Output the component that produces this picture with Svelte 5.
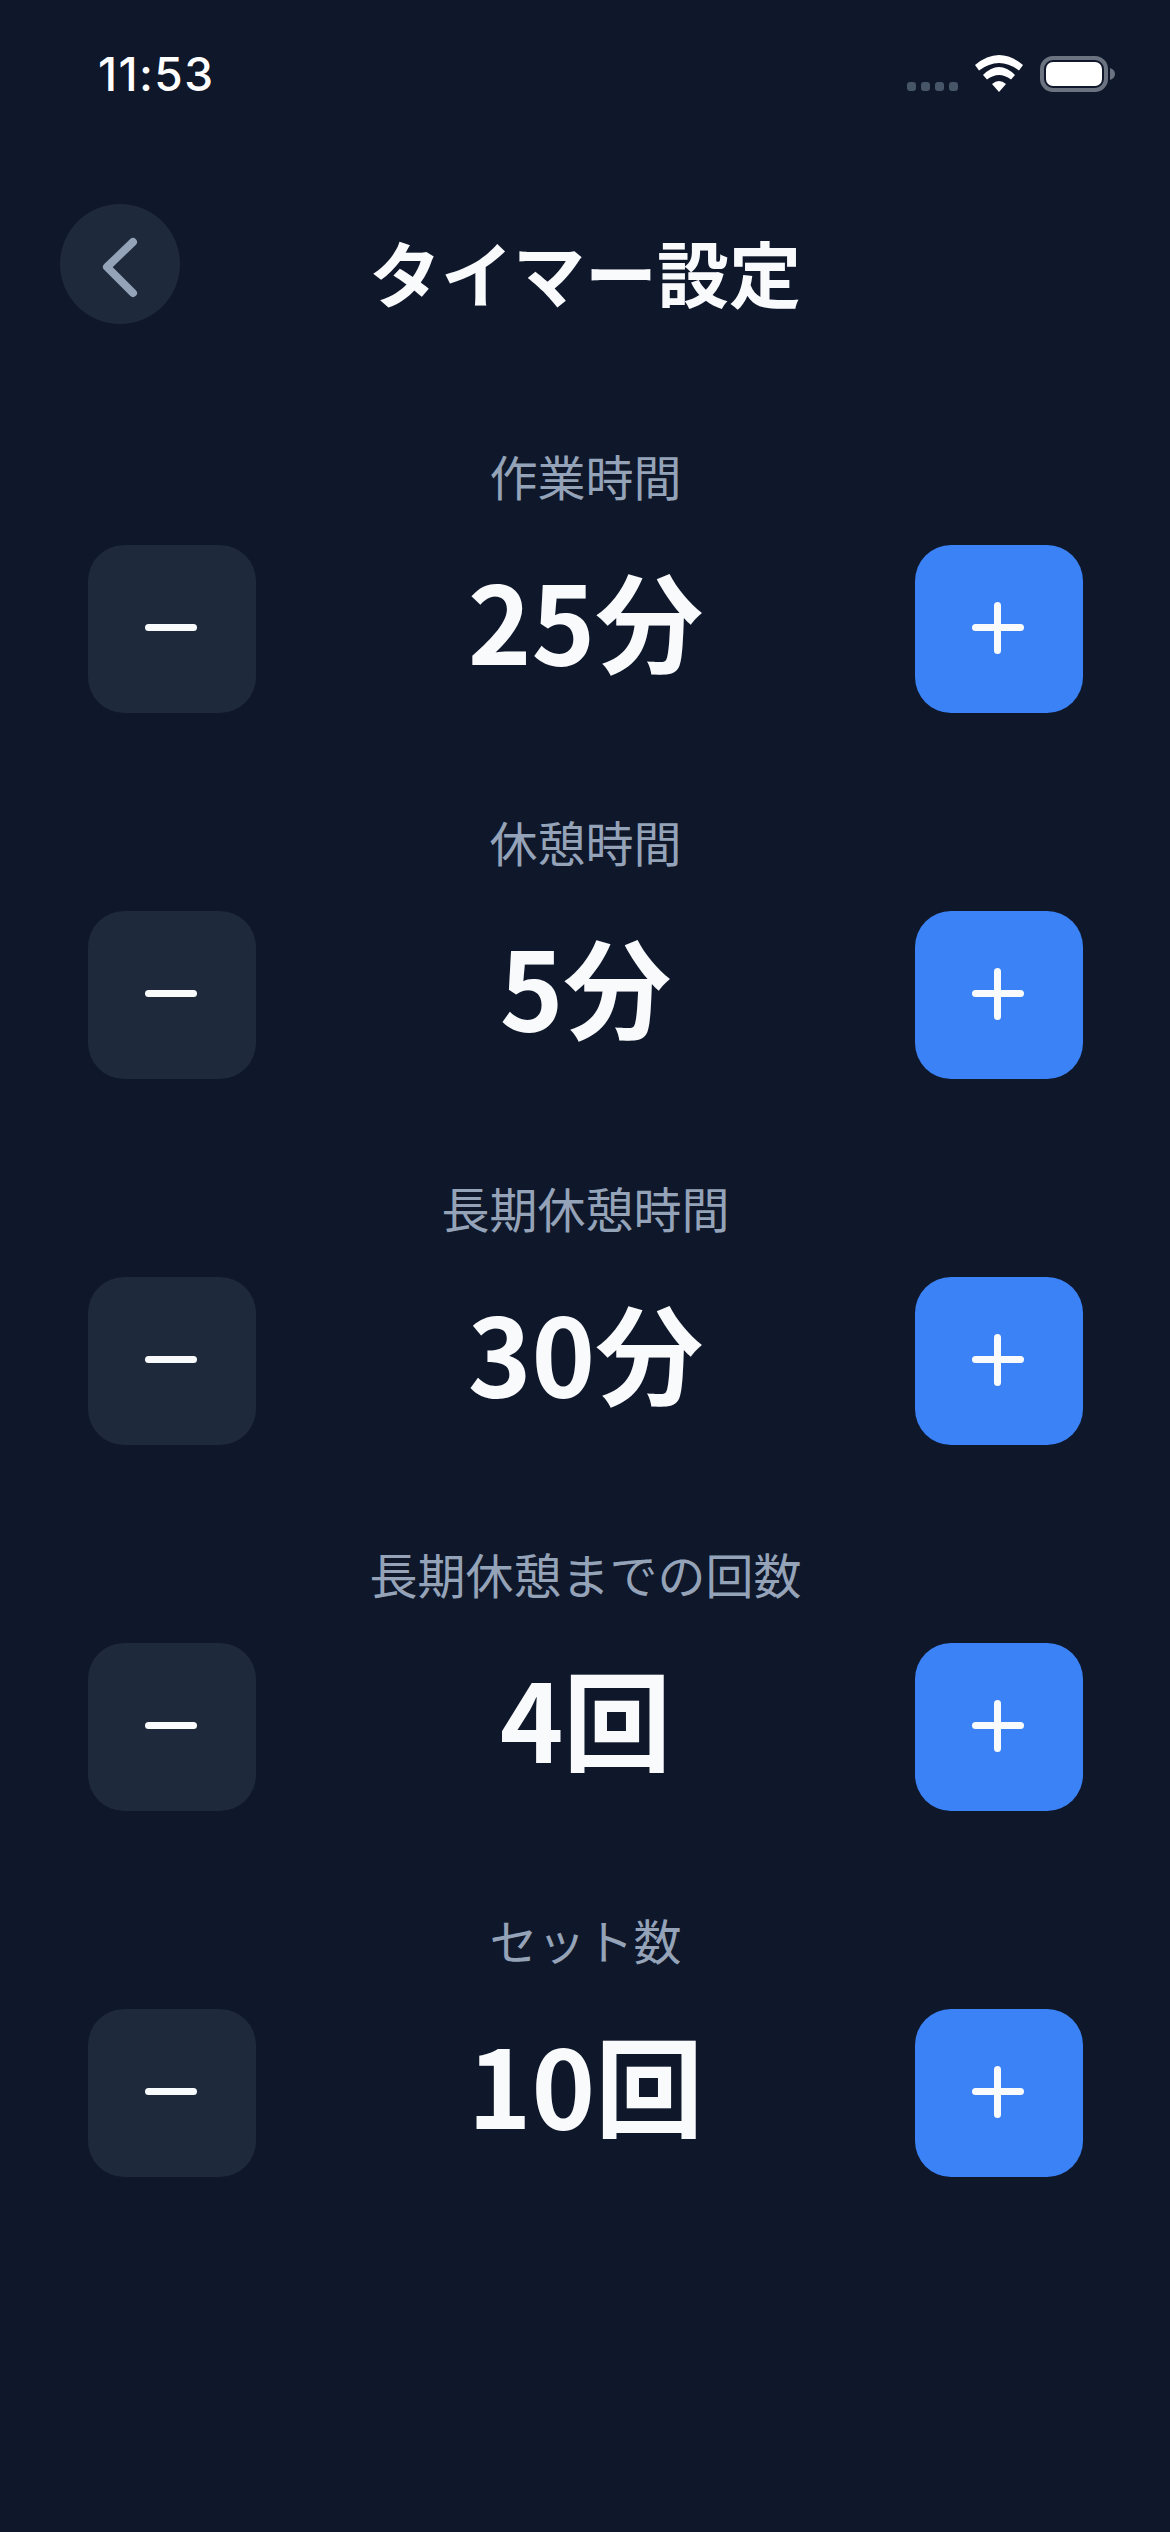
<script lang="ts">
  const settings = [
    { label: "作業時間", value: "25分" },
    { label: "休憩時間", value: "5分" },
    { label: "長期休憩時間", value: "30分" },
    { label: "長期休憩までの回数", value: "4回" },
    { label: "セット数", value: "10回" }
  ];
</script>

<div class="screen">
  <div class="status">
    <span class="time">11:53</span>
    <div class="status-icons">
      <div class="dots"><i></i><i></i><i></i><i></i></div>
      <svg class="wifi" width="48" height="37" viewBox="0 0 48 37">
        <path d="M0 10 Q24 -10 48 10 L44 15.500 Q24 0.500 4 15.500 Z" fill="#fff" />
        <path d="M8 20 Q24 4 40 20 L36 24.500 Q24 15.500 12 24.500 Z" fill="#fff" />
        <path d="M17 29 Q24 23 31 29 L24 37 Z" fill="#fff" />
      </svg>
      <svg class="battery" width="75" height="36" viewBox="0 0 75 36">
        <rect x="2" y="2" width="64" height="32" rx="11" fill="none" stroke="#6b7280" stroke-width="4" />
        <rect x="6" y="6" width="56" height="24" rx="7" fill="#fff" />
        <path d="M70 12 C73 13 75 15 75 18 C75 21 73 23 70 24 Z" fill="#6b7280" />
      </svg>
    </div>
  </div>

  <header class="header">
    <button class="back" aria-label="戻る">
      <svg width="120" height="120" viewBox="0 0 120 120">
        <path d="M73 38 L47 63 L73 89" fill="none" stroke="#94a3b8" stroke-width="8" stroke-linecap="round" stroke-linejoin="round" />
      </svg>
    </button>
    <h1>タイマー設定</h1>
  </header>

  <main class="settings">
    {#each settings as item}
      <section class="setting">
        <div class="label">{item.label}</div>
        <div class="controls">
          <button class="step minus" aria-label="減らす"><span class="bar"></span></button>
          <div class="value">{item.value}</div>
          <button class="step plus" aria-label="増やす"><span class="bar"></span><span class="bar vertical"></span></button>
        </div>
      </section>
    {/each}
  </main>
</div>

<style>
  :global(body) {
    margin: 0;
    background: #0f172a;
  }

  .screen {
    width: 1170px;
    height: 2532px;
    overflow: hidden;
    background: #0f172a;
    color: #f8fafc;
    font-family: "Noto Sans CJK JP", "Noto Sans", sans-serif;
  }

  .status {
    display: flex;
    justify-content: space-between;
    height: 108px;
    padding: 0 55px 0 98px;
    box-sizing: border-box;
  }

  .time {
    margin-top: 49px;
    font-family: Inter, sans-serif;
    font-size: 46px;
    font-weight: 500;
    letter-spacing: 1.4px;
    line-height: 50px;
    color: #fff;
  }

  .status-icons {
    display: flex;
    align-items: flex-start;
    margin-top: 55px;
  }

  .dots {
    display: flex;
    gap: 5px;
    margin-top: 27px;
    margin-right: 17px;
  }

  .dots i {
    width: 9px;
    height: 9px;
    border-radius: 3px;
    background: #475569;
  }

  .wifi {
    margin-right: 17px;
  }

  .battery {
    margin-top: 1px;
  }

  .header {
    position: relative;
    height: 120px;
    margin-top: 96px;
    padding-left: 60px;
  }

  .back {
    display: block;
    width: 120px;
    height: 120px;
    padding: 0;
    border: 0;
    border-radius: 50%;
    background: #1e293b;
  }

  .back svg {
    display: block;
  }

  h1 {
    position: absolute;
    inset: 0;
    margin: 0;
    font-size: 72px;
    font-weight: 700;
    line-height: 134px;
    text-align: center;
  }

  .settings {
    display: flex;
    flex-direction: column;
    gap: 92px;
    margin-top: 115px;
    padding: 0 87px 0 88px;
  }

  .label {
    height: 72px;
    margin-bottom: 34px;
    color: #94a3b8;
    font-size: 48px;
    line-height: 72px;
    text-align: center;
  }

  .controls {
    display: flex;
    align-items: center;
    justify-content: space-between;
  }

  .step {
    position: relative;
    width: 168px;
    height: 168px;
    padding: 0;
    border: 0;
    border-radius: 36px;
  }

  .minus {
    background: #1e293b;
  }

  .plus {
    background: #3b82f6;
  }

  .bar {
    position: absolute;
    top: 79px;
    left: 57px;
    width: 52px;
    height: 7px;
    border-radius: 4px;
    background: #f8fafc;
  }

  .bar.vertical {
    top: 57px;
    left: 79px;
    width: 7px;
    height: 52px;
  }

  .value {
    padding-bottom: 22px;
    font-size: 108px;
    font-weight: 700;
    line-height: 146px;
  }
</style>
